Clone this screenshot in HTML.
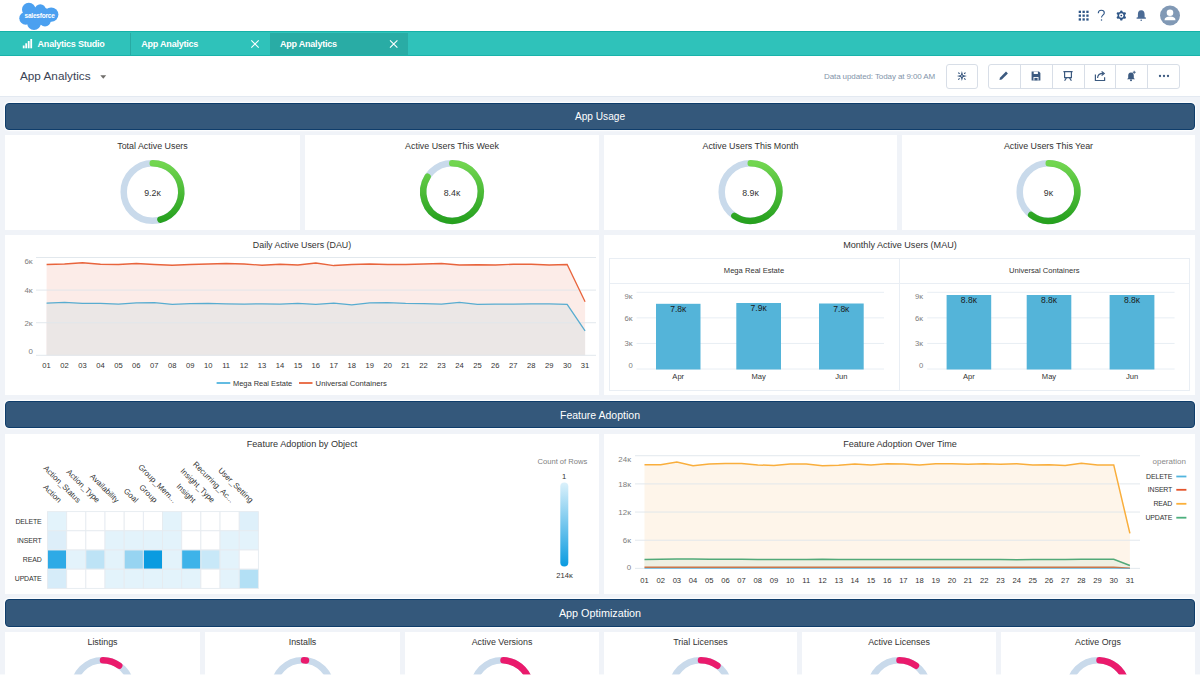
<!DOCTYPE html><html><head><meta charset="utf-8"><style>
*{margin:0;padding:0;box-sizing:border-box}
html,body{width:1200px;height:675px;overflow:hidden;background:#f0f3f8;font-family:"Liberation Sans",sans-serif}
.abs{position:absolute}
.card{position:absolute;background:#fff}
.sec{position:absolute;left:5px;width:1190px;height:27.5px;background:#34587b;border:1px solid #0f3d6b;border-radius:4px;box-shadow:0 0 1.5px 0.8px #fff;color:#fff;font-size:10.5px;text-align:center;line-height:26px}
svg{position:absolute;left:0;top:0;overflow:visible}
svg text{font-family:"Liberation Sans",sans-serif}
</style></head><body>
<div class="abs" style="left:0;top:0;width:1200px;height:32px;background:#fff"></div>
<svg width="1200" height="32" style="left:0;top:0">
<g fill="#4ba0f0">
<circle cx="28.8" cy="9.6" r="6.8"/><circle cx="40.3" cy="9.6" r="5.4"/><circle cx="51.2" cy="14.6" r="7.2"/>
<circle cx="25.7" cy="18.3" r="6.4"/><circle cx="34" cy="23" r="6.9"/><circle cx="45" cy="20.6" r="5.8"/>
<ellipse cx="39" cy="16" rx="15" ry="9"/>
</g>
<text x="39.6" y="17.8" font-size="6.5" fill="#fff" text-anchor="middle" font-weight="bold" letter-spacing="-0.2">salesforce</text>
</svg>
<svg width="1200" height="32" style="left:0;top:0">
<g fill="#2f5687">
<rect x="1078.7" y="10.7" width="2.3" height="2.3"/>
<rect x="1078.7" y="14.5" width="2.3" height="2.3"/>
<rect x="1078.7" y="18.3" width="2.3" height="2.3"/>
<rect x="1082.5" y="10.7" width="2.3" height="2.3"/>
<rect x="1082.5" y="14.5" width="2.3" height="2.3"/>
<rect x="1082.5" y="18.3" width="2.3" height="2.3"/>
<rect x="1086.3" y="10.7" width="2.3" height="2.3"/>
<rect x="1086.3" y="14.5" width="2.3" height="2.3"/>
<rect x="1086.3" y="18.3" width="2.3" height="2.3"/>
</g>
<path d="M1098.3 13.2 C1098.3 10.9 1099.8 10.2 1101.3 10.2 C1103 10.2 1104.3 11.3 1104.3 12.9 C1104.3 15 1101.5 15.4 1101.5 17.6" fill="none" stroke="#2f5687" stroke-width="1.1"/>
<circle cx="1101.5" cy="19.9" r="0.75" fill="#2f5687"/>
<g transform="translate(1121.3,15.5)" fill="#2f5687">
<circle r="3.7"/>
<circle cx="0" cy="-3.9" r="1.2"/><circle cx="3.38" cy="-1.95" r="1.2"/><circle cx="3.38" cy="1.95" r="1.2"/><circle cx="0" cy="3.9" r="1.2"/><circle cx="-3.38" cy="1.95" r="1.2"/><circle cx="-3.38" cy="-1.95" r="1.2"/>
<circle r="2.2" fill="#fff"/><circle r="0.85" fill="#1d3f74"/>
</g>
<path d="M1141.2 10.3 C1138.6 10.3 1137.9 12.4 1137.9 14.4 L1137.9 17.2 L1136.6 17.4 L1136.6 18.8 L1145.9 18.8 L1145.9 17.4 L1144.6 17.2 L1144.6 14.4 C1144.6 12.4 1143.8 10.3 1141.2 10.3 Z" fill="#4b6b95"/>
<circle cx="1141.2" cy="20.3" r="0.8" fill="#4b6b95"/>
<circle cx="1170" cy="15.5" r="10" fill="#8199b5"/>
<circle cx="1170" cy="12.8" r="3.3" fill="#fff"/>
<path d="M1164.5 20.2 C1164.5 17.6 1166.5 16.4 1170 16.4 C1173.5 16.4 1175.5 17.6 1175.5 20.2 Z" fill="#fff"/>
</svg>
<div class="abs" style="left:0;top:31px;width:1200px;height:25px;background:#2fc2ba;border-top:1.5px solid #14b1a8;border-bottom:1px solid #19b3aa"></div>
<div class="abs" style="left:269.5px;top:32.5px;width:138.5px;height:22.5px;background:#29aca5"></div>
<div class="abs" style="left:130px;top:32.5px;width:1px;height:22.5px;background:#28aaa3"></div>
<svg width="1200" height="60" style="left:0;top:0">
<g fill="#fff">
<rect x="22.8" y="45.5" width="1.8" height="2.8"/><rect x="25.3" y="43.3" width="1.8" height="5"/><rect x="27.8" y="41" width="1.8" height="7.3"/><rect x="30.3" y="39" width="1.8" height="9.3"/>
</g>
<text x="37.6" y="46.9" font-size="9.0" fill="#fff" font-weight="bold" text-anchor="start" letter-spacing="-0.22">Analytics Studio</text>
<text x="141.3" y="46.9" font-size="9.0" fill="#fff" font-weight="bold" text-anchor="start" letter-spacing="-0.22">App Analytics</text>
<text x="280" y="46.9" font-size="9.0" fill="#fff" font-weight="bold" text-anchor="start" letter-spacing="-0.22">App Analytics</text>
<path d="M251.3 40.3 L258.7 47.7 M258.7 40.3 L251.3 47.7" stroke="#fff" stroke-width="1.1"/>
<path d="M390 40.3 L397.4 47.7 M397.4 40.3 L390 47.7" stroke="#fff" stroke-width="1.1"/>
</svg>
<div class="abs" style="left:0;top:56px;width:1200px;height:40.5px;background:#fff;border-bottom:1px solid #e3e9f1"></div>
<svg width="1200" height="100" style="left:0;top:0">
<text x="20" y="79.7" font-size="11.75" fill="#3a4354" text-anchor="start">App Analytics</text>
<path d="M100.3 75.2 L106.2 75.2 L103.25 78.8 Z" fill="#706e6b"/>
<text x="824" y="78.9" font-size="8.0" fill="#8394aa" text-anchor="start" letter-spacing="-0.1">Data updated: Today at 9:00 AM</text>
</svg>
<div class="abs" style="left:946px;top:64px;width:32px;height:24.5px;border:1px solid #d8dee7;border-radius:3px;background:#fff"></div>
<div class="abs" style="left:988px;top:64px;width:192px;height:24.5px;border:1px solid #d8dee7;border-radius:3px;background:#fff"></div>
<div class="abs" style="left:1020px;top:64px;width:1px;height:24.5px;background:#d8dee7"></div>
<div class="abs" style="left:1051.6px;top:64px;width:1px;height:24.5px;background:#d8dee7"></div>
<div class="abs" style="left:1083.5px;top:64px;width:1px;height:24.5px;background:#d8dee7"></div>
<div class="abs" style="left:1114.8px;top:64px;width:1px;height:24.5px;background:#d8dee7"></div>
<div class="abs" style="left:1147px;top:64px;width:1px;height:24.5px;background:#d8dee7"></div>
<svg width="1200" height="100" style="left:0;top:0">
<g transform="translate(961.9,76.1)" fill="#3c5a80">
<path d="M0 -5 L1.1 -1.1 L5 0 L1.1 1.1 L0 5 L-1.1 1.1 L-5 0 L-1.1 -1.1 Z"/>
<g stroke="#3c5a80" stroke-width="1.1" stroke-linecap="round"><path d="M2.6 -2.6 L3.3 -3.3 M-2.6 -2.6 L-3.3 -3.3 M2.6 2.6 L3.3 3.3 M-2.6 2.6 L-3.3 3.3"/></g>
<circle r="0.75" fill="#fff"/>
</g>
<path d="M999.5 80 L999.9 77.7 L1006 71.6 L1007.9 73.5 L1001.8 79.6 Z" fill="#3c5a80"/>
<g transform="translate(1036,76)">
<path d="M-4.4 -4.4 H3 L4.4 -3 V4.4 H-4.4 Z" fill="#3c5a80"/>
<rect x="-2.3" y="-4.4" width="4.2" height="2.4" fill="#fff"/>
<rect x="-2.5" y="1" width="5" height="3.4" fill="#fff"/><rect x="-1.6" y="1.9" width="3.2" height="2.5" fill="#3c5a80"/>
</g>
<g transform="translate(1068,76)" stroke="#3c5a80" stroke-width="1.2" fill="none">
<path d="M-4.6 -4.4 H4.6 M-3.4 -4.4 V1.6 H3.4 V-4.4 M-3.4 4.8 L-1.4 1.6 M3.4 4.8 L1.4 1.6"/>
</g>
<g transform="translate(1100,76)" stroke="#3c5a80" stroke-width="1.2" fill="none">
<path d="M-4.6 -1.6 V4.5 H4.6 V1.2 M-2.4 2 C-2.4 -1.4 -0.4 -2.6 3.4 -2.6"/>
<path d="M1.6 -4.6 L4.2 -2.6 L1.6 -0.6" stroke-linejoin="miter"/>
</g>
<g transform="translate(1131,76)" fill="#3c5a80">
<path d="M0 -3.6 C-2.1 -3.6 -2.8 -2 -2.8 -0.3 V2 L-4 3.2 H4 L2.8 2 V-0.3 C2.8 -2 2.1 -3.6 0 -3.6 Z"/>
<circle cy="4.2" r="1"/>
<path d="M3.2 -5.2 V-2.2 M1.7 -3.7 H4.7" stroke="#3c5a80" stroke-width="0.9"/>
</g>
<g fill="#3c5a80"><circle cx="1160" cy="76" r="1.15"/><circle cx="1164" cy="76" r="1.15"/><circle cx="1168" cy="76" r="1.15"/></g>
</svg>
<div class="sec" style="top:102.5px;font-size:10.15px">App Usage</div>
<div class="sec" style="top:400.5px">Feature Adoption</div>
<div class="sec" style="top:599px;font-size:10.8px">App Optimization</div>
<div class="card" style="left:5px;top:135px;width:295px;height:95px"></div>
<div class="card" style="left:305px;top:135px;width:294px;height:95px"></div>
<div class="card" style="left:604px;top:135px;width:293px;height:95px"></div>
<div class="card" style="left:902px;top:135px;width:293px;height:95px"></div>
<div class="card" style="left:5px;top:235px;width:594px;height:160px"></div>
<div class="card" style="left:604px;top:235px;width:591px;height:160px"></div>
<div class="card" style="left:5px;top:433.5px;width:594px;height:160.5px"></div>
<div class="card" style="left:604px;top:433.5px;width:591px;height:160.5px"></div>
<div class="card" style="left:5px;top:632px;width:195px;height:43px"></div>
<div class="card" style="left:205px;top:632px;width:195px;height:43px"></div>
<div class="card" style="left:405px;top:632px;width:194px;height:43px"></div>
<div class="card" style="left:604px;top:632px;width:193px;height:43px"></div>
<div class="card" style="left:802px;top:632px;width:194px;height:43px"></div>
<div class="card" style="left:1001px;top:632px;width:194px;height:43px"></div>
<svg width="1200" height="675" style="left:0;top:0">
<defs>
<linearGradient id="gg" x1="0" y1="0" x2="0" y2="1"><stop offset="0" stop-color="#72d650"/><stop offset="1" stop-color="#27a11f"/></linearGradient>
<linearGradient id="lg" x1="0" y1="0" x2="0" y2="1"><stop offset="0" stop-color="#dcf1fb"/><stop offset="1" stop-color="#0a9be0"/></linearGradient>
</defs>
<text x="152.50" y="148.90" font-size="8.9" fill="#333" text-anchor="middle" font-weight="normal" >Total Active Users</text>
<circle cx="152.5" cy="192" r="28.8" fill="none" stroke="#c9daeb" stroke-width="6.5"/>
<path d="M152.75 163.20 A28.8 28.8 0 0 1 160.44 219.68" fill="none" stroke="url(#gg)" stroke-width="6.5" stroke-linecap="round"/>
<text x="152.50" y="195.80" font-size="8.8" fill="#333" text-anchor="middle" font-weight="normal" >9.2ĸ</text>
<text x="452.00" y="148.90" font-size="8.9" fill="#333" text-anchor="middle" font-weight="normal" >Active Users This Week</text>
<circle cx="452.0" cy="192" r="28.8" fill="none" stroke="#c9daeb" stroke-width="6.5"/>
<path d="M452.25 163.20 A28.8 28.8 0 1 1 427.58 176.74" fill="none" stroke="url(#gg)" stroke-width="6.5" stroke-linecap="round"/>
<text x="452.00" y="195.80" font-size="8.8" fill="#333" text-anchor="middle" font-weight="normal" >8.4ĸ</text>
<text x="750.50" y="148.90" font-size="8.9" fill="#333" text-anchor="middle" font-weight="normal" >Active Users This Month</text>
<circle cx="750.5" cy="192" r="28.8" fill="none" stroke="#c9daeb" stroke-width="6.5"/>
<path d="M750.75 163.20 A28.8 28.8 0 1 1 734.40 215.88" fill="none" stroke="url(#gg)" stroke-width="6.5" stroke-linecap="round"/>
<text x="750.50" y="195.80" font-size="8.8" fill="#333" text-anchor="middle" font-weight="normal" >8.9ĸ</text>
<text x="1048.50" y="148.90" font-size="8.9" fill="#333" text-anchor="middle" font-weight="normal" >Active Users This Year</text>
<circle cx="1048.5" cy="192" r="28.8" fill="none" stroke="#c9daeb" stroke-width="6.5"/>
<path d="M1048.75 163.20 A28.8 28.8 0 1 1 1031.17 215.00" fill="none" stroke="url(#gg)" stroke-width="6.5" stroke-linecap="round"/>
<text x="1048.50" y="195.80" font-size="8.8" fill="#333" text-anchor="middle" font-weight="normal" >9ĸ</text>
<text x="102.50" y="645.20" font-size="8.9" fill="#333" text-anchor="middle" font-weight="normal" >Listings</text>
<circle cx="102.5" cy="689" r="28.8" fill="none" stroke="#c9daeb" stroke-width="6.5"/>
<path d="M103.00 660.20 A28.8 28.8 0 0 1 119.22 665.55" fill="none" stroke="#ea1a6c" stroke-width="6.5" stroke-linecap="round"/>
<text x="302.50" y="645.20" font-size="8.9" fill="#333" text-anchor="middle" font-weight="normal" >Installs</text>
<circle cx="302.5" cy="689" r="28.8" fill="none" stroke="#c9daeb" stroke-width="6.5"/>
<path d="M304.01 660.24 A28.8 28.8 0 0 1 306.01 660.41" fill="none" stroke="#ea1a6c" stroke-width="6.5" stroke-linecap="round"/>
<text x="502.00" y="645.20" font-size="8.9" fill="#333" text-anchor="middle" font-weight="normal" >Active Versions</text>
<circle cx="502.0" cy="689" r="28.8" fill="none" stroke="#c9daeb" stroke-width="6.5"/>
<path d="M503.51 660.24 A28.8 28.8 0 0 1 529.82 681.55" fill="none" stroke="#ea1a6c" stroke-width="6.5" stroke-linecap="round"/>
<text x="700.50" y="645.20" font-size="8.9" fill="#333" text-anchor="middle" font-weight="normal" >Trial Licenses</text>
<circle cx="700.5" cy="689" r="28.8" fill="none" stroke="#c9daeb" stroke-width="6.5"/>
<path d="M701.00 660.20 A28.8 28.8 0 0 1 717.43 665.70" fill="none" stroke="#ea1a6c" stroke-width="6.5" stroke-linecap="round"/>
<text x="899.00" y="645.20" font-size="8.9" fill="#333" text-anchor="middle" font-weight="normal" >Active Licenses</text>
<circle cx="899.0" cy="689" r="28.8" fill="none" stroke="#c9daeb" stroke-width="6.5"/>
<path d="M899.50 660.20 A28.8 28.8 0 0 1 915.93 665.70" fill="none" stroke="#ea1a6c" stroke-width="6.5" stroke-linecap="round"/>
<text x="1098.00" y="645.20" font-size="8.9" fill="#333" text-anchor="middle" font-weight="normal" >Active Orgs</text>
<circle cx="1098.0" cy="689" r="28.8" fill="none" stroke="#c9daeb" stroke-width="6.5"/>
<path d="M1099.51 660.24 A28.8 28.8 0 0 1 1125.82 681.55" fill="none" stroke="#ea1a6c" stroke-width="6.5" stroke-linecap="round"/>
<text x="302.00" y="247.50" font-size="8.85" fill="#333" text-anchor="middle" font-weight="normal" >Daily Active Users (DAU)</text>
<polygon points="46.60,355.30 46.60,264.51 64.55,264.01 82.50,262.75 100.45,264.26 118.40,264.51 136.35,263.50 154.30,264.51 172.25,265.26 190.20,264.51 208.15,264.01 226.10,263.50 244.05,264.01 262.00,265.26 279.95,264.26 297.90,265.01 315.85,263.00 333.80,265.52 351.75,264.51 369.70,264.01 387.65,264.51 405.60,264.51 423.55,264.01 441.50,263.50 459.45,265.01 477.40,264.76 495.35,265.01 513.30,264.26 531.25,264.26 549.20,265.01 567.15,264.51 585.10,301.79 585.10,355.30" fill="#fcece8"/>
<polygon points="46.60,355.30 46.60,303.05 64.55,302.29 82.50,303.30 100.45,303.30 118.40,304.06 136.35,302.80 154.30,302.54 172.25,304.31 190.20,303.55 208.15,303.30 226.10,303.80 244.05,304.06 262.00,303.80 279.95,304.06 297.90,303.30 315.85,304.31 333.80,303.05 351.75,304.81 369.70,302.80 387.65,302.54 405.60,303.30 423.55,303.55 441.50,304.06 459.45,302.29 477.40,304.31 495.35,304.06 513.30,304.06 531.25,303.80 549.20,303.80 567.15,304.31 585.10,330.76 585.10,355.30" fill="#ebe7e6"/>
<line x1="36" x2="596" y1="257.50" y2="257.50" stroke="#dfe5eb" stroke-opacity="0.9" stroke-width="1"/>
<text x="32.80" y="264.30" font-size="7.9" fill="#7d7d7d" text-anchor="end" font-weight="normal" >6ĸ</text>
<line x1="36" x2="596" y1="290.10" y2="290.10" stroke="#dfe5eb" stroke-opacity="0.9" stroke-width="1"/>
<text x="32.80" y="293.30" font-size="7.9" fill="#7d7d7d" text-anchor="end" font-weight="normal" >4ĸ</text>
<line x1="36" x2="596" y1="322.70" y2="322.70" stroke="#dfe5eb" stroke-opacity="0.9" stroke-width="1"/>
<text x="32.80" y="325.60" font-size="7.9" fill="#7d7d7d" text-anchor="end" font-weight="normal" >2ĸ</text>
<line x1="36" x2="596" y1="355.30" y2="355.30" stroke="#dfe5eb" stroke-opacity="0.9" stroke-width="1"/>
<text x="32.80" y="354.30" font-size="7.9" fill="#7d7d7d" text-anchor="end" font-weight="normal" >0</text>
<polyline points="46.60,264.51 64.55,264.01 82.50,262.75 100.45,264.26 118.40,264.51 136.35,263.50 154.30,264.51 172.25,265.26 190.20,264.51 208.15,264.01 226.10,263.50 244.05,264.01 262.00,265.26 279.95,264.26 297.90,265.01 315.85,263.00 333.80,265.52 351.75,264.51 369.70,264.01 387.65,264.51 405.60,264.51 423.55,264.01 441.50,263.50 459.45,265.01 477.40,264.76 495.35,265.01 513.30,264.26 531.25,264.26 549.20,265.01 567.15,264.51 585.10,301.79" fill="none" stroke="#e8643c" stroke-width="1.3"/>
<polyline points="46.60,303.05 64.55,302.29 82.50,303.30 100.45,303.30 118.40,304.06 136.35,302.80 154.30,302.54 172.25,304.31 190.20,303.55 208.15,303.30 226.10,303.80 244.05,304.06 262.00,303.80 279.95,304.06 297.90,303.30 315.85,304.31 333.80,303.05 351.75,304.81 369.70,302.80 387.65,302.54 405.60,303.30 423.55,303.55 441.50,304.06 459.45,302.29 477.40,304.31 495.35,304.06 513.30,304.06 531.25,303.80 549.20,303.80 567.15,304.31 585.10,330.76" fill="none" stroke="#58acd0" stroke-width="1.3"/>
<text x="46.60" y="368.00" font-size="7.6" fill="#333" text-anchor="middle" font-weight="normal" >01</text>
<text x="64.55" y="368.00" font-size="7.6" fill="#333" text-anchor="middle" font-weight="normal" >02</text>
<text x="82.50" y="368.00" font-size="7.6" fill="#333" text-anchor="middle" font-weight="normal" >03</text>
<text x="100.45" y="368.00" font-size="7.6" fill="#333" text-anchor="middle" font-weight="normal" >04</text>
<text x="118.40" y="368.00" font-size="7.6" fill="#333" text-anchor="middle" font-weight="normal" >05</text>
<text x="136.35" y="368.00" font-size="7.6" fill="#333" text-anchor="middle" font-weight="normal" >06</text>
<text x="154.30" y="368.00" font-size="7.6" fill="#333" text-anchor="middle" font-weight="normal" >07</text>
<text x="172.25" y="368.00" font-size="7.6" fill="#333" text-anchor="middle" font-weight="normal" >08</text>
<text x="190.20" y="368.00" font-size="7.6" fill="#333" text-anchor="middle" font-weight="normal" >09</text>
<text x="208.15" y="368.00" font-size="7.6" fill="#333" text-anchor="middle" font-weight="normal" >10</text>
<text x="226.10" y="368.00" font-size="7.6" fill="#333" text-anchor="middle" font-weight="normal" >11</text>
<text x="244.05" y="368.00" font-size="7.6" fill="#333" text-anchor="middle" font-weight="normal" >12</text>
<text x="262.00" y="368.00" font-size="7.6" fill="#333" text-anchor="middle" font-weight="normal" >13</text>
<text x="279.95" y="368.00" font-size="7.6" fill="#333" text-anchor="middle" font-weight="normal" >14</text>
<text x="297.90" y="368.00" font-size="7.6" fill="#333" text-anchor="middle" font-weight="normal" >15</text>
<text x="315.85" y="368.00" font-size="7.6" fill="#333" text-anchor="middle" font-weight="normal" >16</text>
<text x="333.80" y="368.00" font-size="7.6" fill="#333" text-anchor="middle" font-weight="normal" >17</text>
<text x="351.75" y="368.00" font-size="7.6" fill="#333" text-anchor="middle" font-weight="normal" >18</text>
<text x="369.70" y="368.00" font-size="7.6" fill="#333" text-anchor="middle" font-weight="normal" >19</text>
<text x="387.65" y="368.00" font-size="7.6" fill="#333" text-anchor="middle" font-weight="normal" >20</text>
<text x="405.60" y="368.00" font-size="7.6" fill="#333" text-anchor="middle" font-weight="normal" >21</text>
<text x="423.55" y="368.00" font-size="7.6" fill="#333" text-anchor="middle" font-weight="normal" >22</text>
<text x="441.50" y="368.00" font-size="7.6" fill="#333" text-anchor="middle" font-weight="normal" >23</text>
<text x="459.45" y="368.00" font-size="7.6" fill="#333" text-anchor="middle" font-weight="normal" >24</text>
<text x="477.40" y="368.00" font-size="7.6" fill="#333" text-anchor="middle" font-weight="normal" >25</text>
<text x="495.35" y="368.00" font-size="7.6" fill="#333" text-anchor="middle" font-weight="normal" >26</text>
<text x="513.30" y="368.00" font-size="7.6" fill="#333" text-anchor="middle" font-weight="normal" >27</text>
<text x="531.25" y="368.00" font-size="7.6" fill="#333" text-anchor="middle" font-weight="normal" >28</text>
<text x="549.20" y="368.00" font-size="7.6" fill="#333" text-anchor="middle" font-weight="normal" >29</text>
<text x="567.15" y="368.00" font-size="7.6" fill="#333" text-anchor="middle" font-weight="normal" >30</text>
<text x="585.10" y="368.00" font-size="7.6" fill="#333" text-anchor="middle" font-weight="normal" >31</text>
<line x1="216.6" x2="230.3" y1="383" y2="383" stroke="#52b5df" stroke-width="1.8"/>
<text x="233.00" y="385.60" font-size="7.45" fill="#333" text-anchor="start" font-weight="normal" >Mega Real Estate</text>
<line x1="299" x2="312.5" y1="383" y2="383" stroke="#e8643c" stroke-width="1.8"/>
<text x="315.60" y="385.60" font-size="7.7" fill="#333" text-anchor="start" font-weight="normal" >Universal Containers</text>
<text x="900.00" y="247.50" font-size="9.1" fill="#333" text-anchor="middle" font-weight="normal" >Monthly Active Users (MAU)</text>
<rect x="609.5" y="258.5" width="580" height="132" fill="none" stroke="#e9eef4" stroke-width="1"/>
<line x1="609.5" x2="1189.5" y1="283.5" y2="283.5" stroke="#e9eef4"/>
<line x1="899.5" x2="899.5" y1="258.5" y2="390.5" stroke="#e9eef4"/>
<text x="754.00" y="273.00" font-size="7.6" fill="#333" text-anchor="middle" font-weight="normal" >Mega Real Estate</text>
<line x1="636.5" x2="884" y1="369.00" y2="369.00" stroke="#e8eef4"/>
<text x="632.70" y="368.00" font-size="7.7" fill="#7d7d7d" text-anchor="end" font-weight="normal" >0</text>
<line x1="636.5" x2="884" y1="343.43" y2="343.43" stroke="#e8eef4"/>
<text x="632.70" y="346.10" font-size="7.7" fill="#7d7d7d" text-anchor="end" font-weight="normal" >3ĸ</text>
<line x1="636.5" x2="884" y1="317.87" y2="317.87" stroke="#e8eef4"/>
<text x="632.70" y="321.40" font-size="7.7" fill="#7d7d7d" text-anchor="end" font-weight="normal" >6ĸ</text>
<line x1="636.5" x2="884" y1="292.30" y2="292.30" stroke="#e8eef4"/>
<text x="632.70" y="298.70" font-size="7.7" fill="#7d7d7d" text-anchor="end" font-weight="normal" >9ĸ</text>
<rect x="656" y="303.8" width="44.50" height="65.70" fill="#54b4d9"/>
<text x="678.25" y="311.80" font-size="8.5" fill="#1a1a1a" text-anchor="middle" font-weight="normal" >7.8ĸ</text>
<rect x="736.3" y="303" width="44.70" height="66.50" fill="#54b4d9"/>
<text x="758.65" y="311.00" font-size="8.5" fill="#1a1a1a" text-anchor="middle" font-weight="normal" >7.9ĸ</text>
<rect x="819" y="303.5" width="44.70" height="66.00" fill="#54b4d9"/>
<text x="841.35" y="311.50" font-size="8.5" fill="#1a1a1a" text-anchor="middle" font-weight="normal" >7.8ĸ</text>
<text x="678.25" y="379.30" font-size="7.6" fill="#333" text-anchor="middle" font-weight="normal" >Apr</text>
<text x="758.65" y="379.30" font-size="7.6" fill="#333" text-anchor="middle" font-weight="normal" >May</text>
<text x="841.35" y="379.30" font-size="7.6" fill="#333" text-anchor="middle" font-weight="normal" >Jun</text>
<text x="1044.30" y="273.00" font-size="7.6" fill="#333" text-anchor="middle" font-weight="normal" >Universal Containers</text>
<line x1="927.2" x2="1174.6" y1="369.00" y2="369.00" stroke="#e8eef4"/>
<text x="923.20" y="368.00" font-size="7.7" fill="#7d7d7d" text-anchor="end" font-weight="normal" >0</text>
<line x1="927.2" x2="1174.6" y1="343.43" y2="343.43" stroke="#e8eef4"/>
<text x="923.20" y="346.10" font-size="7.7" fill="#7d7d7d" text-anchor="end" font-weight="normal" >3ĸ</text>
<line x1="927.2" x2="1174.6" y1="317.87" y2="317.87" stroke="#e8eef4"/>
<text x="923.20" y="321.40" font-size="7.7" fill="#7d7d7d" text-anchor="end" font-weight="normal" >6ĸ</text>
<line x1="927.2" x2="1174.6" y1="292.30" y2="292.30" stroke="#e8eef4"/>
<text x="923.20" y="298.70" font-size="7.7" fill="#7d7d7d" text-anchor="end" font-weight="normal" >9ĸ</text>
<rect x="946.6" y="295" width="44.60" height="74.50" fill="#54b4d9"/>
<text x="968.90" y="303.00" font-size="8.5" fill="#1a1a1a" text-anchor="middle" font-weight="normal" >8.8ĸ</text>
<rect x="1026.7" y="295" width="44.60" height="74.50" fill="#54b4d9"/>
<text x="1049.00" y="303.00" font-size="8.5" fill="#1a1a1a" text-anchor="middle" font-weight="normal" >8.8ĸ</text>
<rect x="1109.6" y="295" width="44.80" height="74.50" fill="#54b4d9"/>
<text x="1132.00" y="303.00" font-size="8.5" fill="#1a1a1a" text-anchor="middle" font-weight="normal" >8.8ĸ</text>
<text x="968.90" y="379.30" font-size="7.6" fill="#333" text-anchor="middle" font-weight="normal" >Apr</text>
<text x="1049.00" y="379.30" font-size="7.6" fill="#333" text-anchor="middle" font-weight="normal" >May</text>
<text x="1132.00" y="379.30" font-size="7.6" fill="#333" text-anchor="middle" font-weight="normal" >Jun</text>
<text x="302.00" y="446.50" font-size="9.15" fill="#333" text-anchor="middle" font-weight="normal" >Feature Adoption by Object</text>
<rect x="47.50" y="511.60" width="19.17" height="19.20" fill="#e3f3fb" stroke="#e6ebf0" stroke-width="0.9"/>
<rect x="66.67" y="511.60" width="19.17" height="19.20" fill="#ffffff" stroke="#e6ebf0" stroke-width="0.9"/>
<rect x="85.85" y="511.60" width="19.17" height="19.20" fill="#ffffff" stroke="#e6ebf0" stroke-width="0.9"/>
<rect x="105.02" y="511.60" width="19.17" height="19.20" fill="#ffffff" stroke="#e6ebf0" stroke-width="0.9"/>
<rect x="124.19" y="511.60" width="19.17" height="19.20" fill="#ffffff" stroke="#e6ebf0" stroke-width="0.9"/>
<rect x="143.36" y="511.60" width="19.17" height="19.20" fill="#ffffff" stroke="#e6ebf0" stroke-width="0.9"/>
<rect x="162.54" y="511.60" width="19.17" height="19.20" fill="#e3f3fb" stroke="#e6ebf0" stroke-width="0.9"/>
<rect x="181.71" y="511.60" width="19.17" height="19.20" fill="#ffffff" stroke="#e6ebf0" stroke-width="0.9"/>
<rect x="200.88" y="511.60" width="19.17" height="19.20" fill="#ffffff" stroke="#e6ebf0" stroke-width="0.9"/>
<rect x="220.05" y="511.60" width="19.17" height="19.20" fill="#ffffff" stroke="#e6ebf0" stroke-width="0.9"/>
<rect x="239.23" y="511.60" width="19.17" height="19.20" fill="#def0fa" stroke="#e6ebf0" stroke-width="0.9"/>
<text x="41.50" y="523.80" font-size="6.95" fill="#333" text-anchor="end" font-weight="normal" letter-spacing="-0.15">DELETE</text>
<rect x="47.50" y="530.80" width="19.17" height="19.20" fill="#ddeef9" stroke="#e6ebf0" stroke-width="0.9"/>
<rect x="66.67" y="530.80" width="19.17" height="19.20" fill="#ffffff" stroke="#e6ebf0" stroke-width="0.9"/>
<rect x="85.85" y="530.80" width="19.17" height="19.20" fill="#ffffff" stroke="#e6ebf0" stroke-width="0.9"/>
<rect x="105.02" y="530.80" width="19.17" height="19.20" fill="#e3f3fb" stroke="#e6ebf0" stroke-width="0.9"/>
<rect x="124.19" y="530.80" width="19.17" height="19.20" fill="#e3f3fb" stroke="#e6ebf0" stroke-width="0.9"/>
<rect x="143.36" y="530.80" width="19.17" height="19.20" fill="#e3f3fb" stroke="#e6ebf0" stroke-width="0.9"/>
<rect x="162.54" y="530.80" width="19.17" height="19.20" fill="#e3f3fb" stroke="#e6ebf0" stroke-width="0.9"/>
<rect x="181.71" y="530.80" width="19.17" height="19.20" fill="#ffffff" stroke="#e6ebf0" stroke-width="0.9"/>
<rect x="200.88" y="530.80" width="19.17" height="19.20" fill="#ffffff" stroke="#e6ebf0" stroke-width="0.9"/>
<rect x="220.05" y="530.80" width="19.17" height="19.20" fill="#e3f3fb" stroke="#e6ebf0" stroke-width="0.9"/>
<rect x="239.23" y="530.80" width="19.17" height="19.20" fill="#e3f3fb" stroke="#e6ebf0" stroke-width="0.9"/>
<text x="41.50" y="543.00" font-size="6.95" fill="#333" text-anchor="end" font-weight="normal" letter-spacing="-0.15">INSERT</text>
<rect x="47.50" y="550.00" width="19.17" height="19.20" fill="#2eaae6" stroke="#e6ebf0" stroke-width="0.9"/>
<rect x="66.67" y="550.00" width="19.17" height="19.20" fill="#e3f3fb" stroke="#e6ebf0" stroke-width="0.9"/>
<rect x="85.85" y="550.00" width="19.17" height="19.20" fill="#bde3f6" stroke="#e6ebf0" stroke-width="0.9"/>
<rect x="105.02" y="550.00" width="19.17" height="19.20" fill="#e3f3fb" stroke="#e6ebf0" stroke-width="0.9"/>
<rect x="124.19" y="550.00" width="19.17" height="19.20" fill="#97d4f1" stroke="#e6ebf0" stroke-width="0.9"/>
<rect x="143.36" y="550.00" width="19.17" height="19.20" fill="#0a9be0" stroke="#e6ebf0" stroke-width="0.9"/>
<rect x="162.54" y="550.00" width="19.17" height="19.20" fill="#e3f3fb" stroke="#e6ebf0" stroke-width="0.9"/>
<rect x="181.71" y="550.00" width="19.17" height="19.20" fill="#3eb3e9" stroke="#e6ebf0" stroke-width="0.9"/>
<rect x="200.88" y="550.00" width="19.17" height="19.20" fill="#c8e8f8" stroke="#e6ebf0" stroke-width="0.9"/>
<rect x="220.05" y="550.00" width="19.17" height="19.20" fill="#e3f3fb" stroke="#e6ebf0" stroke-width="0.9"/>
<rect x="239.23" y="550.00" width="19.17" height="19.20" fill="#ffffff" stroke="#e6ebf0" stroke-width="0.9"/>
<text x="41.50" y="562.20" font-size="6.95" fill="#333" text-anchor="end" font-weight="normal" letter-spacing="-0.15">READ</text>
<rect x="47.50" y="569.20" width="19.17" height="19.20" fill="#d6ecf9" stroke="#e6ebf0" stroke-width="0.9"/>
<rect x="66.67" y="569.20" width="19.17" height="19.20" fill="#ffffff" stroke="#e6ebf0" stroke-width="0.9"/>
<rect x="85.85" y="569.20" width="19.17" height="19.20" fill="#ffffff" stroke="#e6ebf0" stroke-width="0.9"/>
<rect x="105.02" y="569.20" width="19.17" height="19.20" fill="#e3f3fb" stroke="#e6ebf0" stroke-width="0.9"/>
<rect x="124.19" y="569.20" width="19.17" height="19.20" fill="#e3f3fb" stroke="#e6ebf0" stroke-width="0.9"/>
<rect x="143.36" y="569.20" width="19.17" height="19.20" fill="#e3f3fb" stroke="#e6ebf0" stroke-width="0.9"/>
<rect x="162.54" y="569.20" width="19.17" height="19.20" fill="#e3f3fb" stroke="#e6ebf0" stroke-width="0.9"/>
<rect x="181.71" y="569.20" width="19.17" height="19.20" fill="#e3f3fb" stroke="#e6ebf0" stroke-width="0.9"/>
<rect x="200.88" y="569.20" width="19.17" height="19.20" fill="#ffffff" stroke="#e6ebf0" stroke-width="0.9"/>
<rect x="220.05" y="569.20" width="19.17" height="19.20" fill="#e3f3fb" stroke="#e6ebf0" stroke-width="0.9"/>
<rect x="239.23" y="569.20" width="19.17" height="19.20" fill="#b3e0f5" stroke="#e6ebf0" stroke-width="0.9"/>
<text x="41.50" y="581.40" font-size="6.95" fill="#333" text-anchor="end" font-weight="normal" letter-spacing="-0.15">UPDATE</text>
<text x="58.29" y="503.20" font-size="7.9" fill="#333" text-anchor="end" transform="rotate(45 58.29 503.20)">Action</text>
<text x="77.46" y="503.20" font-size="7.9" fill="#333" text-anchor="end" transform="rotate(45 77.46 503.20)">Action_Status</text>
<text x="96.63" y="503.20" font-size="7.9" fill="#333" text-anchor="end" transform="rotate(45 96.63 503.20)">Action_Type</text>
<text x="115.80" y="503.20" font-size="7.9" fill="#333" text-anchor="end" transform="rotate(45 115.80 503.20)">Availability</text>
<text x="134.98" y="503.20" font-size="7.9" fill="#333" text-anchor="end" transform="rotate(45 134.98 503.20)">Goal</text>
<text x="154.15" y="503.20" font-size="7.9" fill="#333" text-anchor="end" transform="rotate(45 154.15 503.20)">Group</text>
<text x="173.32" y="503.20" font-size="7.9" fill="#333" text-anchor="end" transform="rotate(45 173.32 503.20)">Group_Mem...</text>
<text x="192.50" y="503.20" font-size="7.9" fill="#333" text-anchor="end" transform="rotate(45 192.50 503.20)">Insight</text>
<text x="211.67" y="503.20" font-size="7.9" fill="#333" text-anchor="end" transform="rotate(45 211.67 503.20)">Insight_Type</text>
<text x="230.84" y="503.20" font-size="7.9" fill="#333" text-anchor="end" transform="rotate(45 230.84 503.20)">Recurring_Ac...</text>
<text x="250.01" y="503.20" font-size="7.9" fill="#333" text-anchor="end" transform="rotate(45 250.01 503.20)">User_Setting</text>
<text x="562.40" y="463.50" font-size="7.6" fill="#7f7f7f" text-anchor="middle" font-weight="normal" >Count of Rows</text>
<text x="564.00" y="479.20" font-size="7.6" fill="#333" text-anchor="middle" font-weight="normal" >1</text>
<rect x="560.3" y="482.4" width="8" height="84.2" rx="4" fill="url(#lg)"/>
<text x="564.50" y="577.70" font-size="7.6" fill="#333" text-anchor="middle" font-weight="normal" >214ĸ</text>
<text x="900.00" y="446.50" font-size="9.1" fill="#333" text-anchor="middle" font-weight="normal" >Feature Adoption Over Time</text>
<polygon points="644.50,568.40 644.50,464.63 660.68,464.63 676.86,461.96 693.04,465.82 709.22,464.04 725.40,463.45 741.58,463.45 757.76,464.93 773.94,465.52 790.12,464.04 806.30,464.04 822.48,465.82 838.66,465.22 854.84,464.04 871.02,464.93 887.20,463.74 903.38,464.04 919.56,464.93 935.74,463.74 951.92,463.74 968.10,464.33 984.28,463.74 1000.46,464.33 1016.64,463.74 1032.82,464.93 1049.00,464.63 1065.18,465.52 1081.36,463.15 1097.54,464.93 1113.72,464.93 1129.90,533.41 1129.90,568.40" fill="#fef5ea"/>
<polygon points="644.50,568.40 644.50,559.50 660.68,559.35 676.86,558.91 693.04,558.91 709.22,559.21 725.40,559.35 741.58,559.35 757.76,559.50 773.94,559.50 790.12,559.50 806.30,559.50 822.48,559.21 838.66,559.50 854.84,559.50 871.02,559.50 887.20,559.50 903.38,559.50 919.56,559.50 935.74,559.50 951.92,559.50 968.10,559.50 984.28,559.50 1000.46,559.50 1016.64,559.65 1032.82,559.50 1049.00,559.50 1065.18,559.50 1081.36,559.35 1097.54,559.21 1113.72,559.35 1129.90,565.43 1129.90,568.40" fill="#eef0e3"/>
<line x1="635" x2="1140" y1="455.70" y2="455.70" stroke="#dfe5eb" stroke-opacity="0.9"/>
<text x="631.10" y="462.10" font-size="7.9" fill="#7d7d7d" text-anchor="end" font-weight="normal" >24ĸ</text>
<line x1="635" x2="1140" y1="483.88" y2="483.88" stroke="#dfe5eb" stroke-opacity="0.9"/>
<text x="631.10" y="486.70" font-size="7.9" fill="#7d7d7d" text-anchor="end" font-weight="normal" >18ĸ</text>
<line x1="635" x2="1140" y1="512.05" y2="512.05" stroke="#dfe5eb" stroke-opacity="0.9"/>
<text x="631.10" y="514.80" font-size="7.9" fill="#7d7d7d" text-anchor="end" font-weight="normal" >12ĸ</text>
<line x1="635" x2="1140" y1="540.23" y2="540.23" stroke="#dfe5eb" stroke-opacity="0.9"/>
<text x="631.10" y="543.00" font-size="7.9" fill="#7d7d7d" text-anchor="end" font-weight="normal" >6ĸ</text>
<line x1="635" x2="1140" y1="568.40" y2="568.40" stroke="#dfe5eb" stroke-opacity="0.9"/>
<text x="631.10" y="569.70" font-size="7.9" fill="#7d7d7d" text-anchor="end" font-weight="normal" >0</text>
<polyline points="644.50,464.63 660.68,464.63 676.86,461.96 693.04,465.82 709.22,464.04 725.40,463.45 741.58,463.45 757.76,464.93 773.94,465.52 790.12,464.04 806.30,464.04 822.48,465.82 838.66,465.22 854.84,464.04 871.02,464.93 887.20,463.74 903.38,464.04 919.56,464.93 935.74,463.74 951.92,463.74 968.10,464.33 984.28,463.74 1000.46,464.33 1016.64,463.74 1032.82,464.93 1049.00,464.63 1065.18,465.52 1081.36,463.15 1097.54,464.93 1113.72,464.93 1129.90,533.41" fill="none" stroke="#f9ae3c" stroke-width="1.5"/>
<polyline points="644.50,559.50 660.68,559.35 676.86,558.91 693.04,558.91 709.22,559.21 725.40,559.35 741.58,559.35 757.76,559.50 773.94,559.50 790.12,559.50 806.30,559.50 822.48,559.21 838.66,559.50 854.84,559.50 871.02,559.50 887.20,559.50 903.38,559.50 919.56,559.50 935.74,559.50 951.92,559.50 968.10,559.50 984.28,559.50 1000.46,559.50 1016.64,559.65 1032.82,559.50 1049.00,559.50 1065.18,559.50 1081.36,559.35 1097.54,559.21 1113.72,559.35 1129.90,565.43" fill="none" stroke="#52a978" stroke-width="1.5"/>
<polyline points="644.50,567.30 660.68,567.30 676.86,567.30 693.04,567.30 709.22,567.30 725.40,567.30 741.58,567.30 757.76,567.30 773.94,567.30 790.12,567.30 806.30,567.30 822.48,567.30 838.66,567.30 854.84,567.30 871.02,567.30 887.20,567.30 903.38,567.30 919.56,567.30 935.74,567.30 951.92,567.30 968.10,567.30 984.28,567.30 1000.46,567.30 1016.64,567.30 1032.82,567.30 1049.00,567.30 1065.18,567.30 1081.36,567.30 1097.54,567.30 1113.72,567.30 1129.90,568.20" fill="none" stroke="#cf7342" stroke-width="1.5"/>
<line x1="644.5" x2="1129.9" y1="568.4" y2="568.4" stroke="#5fb3da" stroke-width="0.8"/>
<text x="644.50" y="583.00" font-size="7.6" fill="#333" text-anchor="middle" font-weight="normal" >01</text>
<text x="660.68" y="583.00" font-size="7.6" fill="#333" text-anchor="middle" font-weight="normal" >02</text>
<text x="676.86" y="583.00" font-size="7.6" fill="#333" text-anchor="middle" font-weight="normal" >03</text>
<text x="693.04" y="583.00" font-size="7.6" fill="#333" text-anchor="middle" font-weight="normal" >04</text>
<text x="709.22" y="583.00" font-size="7.6" fill="#333" text-anchor="middle" font-weight="normal" >05</text>
<text x="725.40" y="583.00" font-size="7.6" fill="#333" text-anchor="middle" font-weight="normal" >06</text>
<text x="741.58" y="583.00" font-size="7.6" fill="#333" text-anchor="middle" font-weight="normal" >07</text>
<text x="757.76" y="583.00" font-size="7.6" fill="#333" text-anchor="middle" font-weight="normal" >08</text>
<text x="773.94" y="583.00" font-size="7.6" fill="#333" text-anchor="middle" font-weight="normal" >09</text>
<text x="790.12" y="583.00" font-size="7.6" fill="#333" text-anchor="middle" font-weight="normal" >10</text>
<text x="806.30" y="583.00" font-size="7.6" fill="#333" text-anchor="middle" font-weight="normal" >11</text>
<text x="822.48" y="583.00" font-size="7.6" fill="#333" text-anchor="middle" font-weight="normal" >12</text>
<text x="838.66" y="583.00" font-size="7.6" fill="#333" text-anchor="middle" font-weight="normal" >13</text>
<text x="854.84" y="583.00" font-size="7.6" fill="#333" text-anchor="middle" font-weight="normal" >14</text>
<text x="871.02" y="583.00" font-size="7.6" fill="#333" text-anchor="middle" font-weight="normal" >15</text>
<text x="887.20" y="583.00" font-size="7.6" fill="#333" text-anchor="middle" font-weight="normal" >16</text>
<text x="903.38" y="583.00" font-size="7.6" fill="#333" text-anchor="middle" font-weight="normal" >17</text>
<text x="919.56" y="583.00" font-size="7.6" fill="#333" text-anchor="middle" font-weight="normal" >18</text>
<text x="935.74" y="583.00" font-size="7.6" fill="#333" text-anchor="middle" font-weight="normal" >19</text>
<text x="951.92" y="583.00" font-size="7.6" fill="#333" text-anchor="middle" font-weight="normal" >20</text>
<text x="968.10" y="583.00" font-size="7.6" fill="#333" text-anchor="middle" font-weight="normal" >21</text>
<text x="984.28" y="583.00" font-size="7.6" fill="#333" text-anchor="middle" font-weight="normal" >22</text>
<text x="1000.46" y="583.00" font-size="7.6" fill="#333" text-anchor="middle" font-weight="normal" >23</text>
<text x="1016.64" y="583.00" font-size="7.6" fill="#333" text-anchor="middle" font-weight="normal" >24</text>
<text x="1032.82" y="583.00" font-size="7.6" fill="#333" text-anchor="middle" font-weight="normal" >25</text>
<text x="1049.00" y="583.00" font-size="7.6" fill="#333" text-anchor="middle" font-weight="normal" >26</text>
<text x="1065.18" y="583.00" font-size="7.6" fill="#333" text-anchor="middle" font-weight="normal" >27</text>
<text x="1081.36" y="583.00" font-size="7.6" fill="#333" text-anchor="middle" font-weight="normal" >28</text>
<text x="1097.54" y="583.00" font-size="7.6" fill="#333" text-anchor="middle" font-weight="normal" >29</text>
<text x="1113.72" y="583.00" font-size="7.6" fill="#333" text-anchor="middle" font-weight="normal" >30</text>
<text x="1129.90" y="583.00" font-size="7.6" fill="#333" text-anchor="middle" font-weight="normal" >31</text>
<text x="1169.20" y="463.50" font-size="8.0" fill="#8a8a8a" text-anchor="middle" font-weight="normal" >operation</text>
<text x="1172.20" y="479.10" font-size="6.95" fill="#333" text-anchor="end" font-weight="normal" letter-spacing="-0.15">DELETE</text>
<line x1="1176.3" x2="1186.4" y1="476.5" y2="476.5" stroke="#52b5df" stroke-width="1.8"/>
<text x="1172.20" y="492.40" font-size="6.95" fill="#333" text-anchor="end" font-weight="normal" letter-spacing="-0.15">INSERT</text>
<line x1="1176.3" x2="1186.4" y1="489.8" y2="489.8" stroke="#e4542c" stroke-width="1.8"/>
<text x="1172.20" y="506.40" font-size="6.95" fill="#333" text-anchor="end" font-weight="normal" letter-spacing="-0.15">READ</text>
<line x1="1176.3" x2="1186.4" y1="503.8" y2="503.8" stroke="#fbb03b" stroke-width="1.8"/>
<text x="1172.20" y="520.30" font-size="6.95" fill="#333" text-anchor="end" font-weight="normal" letter-spacing="-0.15">UPDATE</text>
<line x1="1176.3" x2="1186.4" y1="517.7" y2="517.7" stroke="#4caf7d" stroke-width="1.8"/>
</svg>
<div class="abs" style="left:0;top:673.5px;width:1200px;height:1.5px;background:rgba(255,255,255,0.55)"></div>
</body></html>
